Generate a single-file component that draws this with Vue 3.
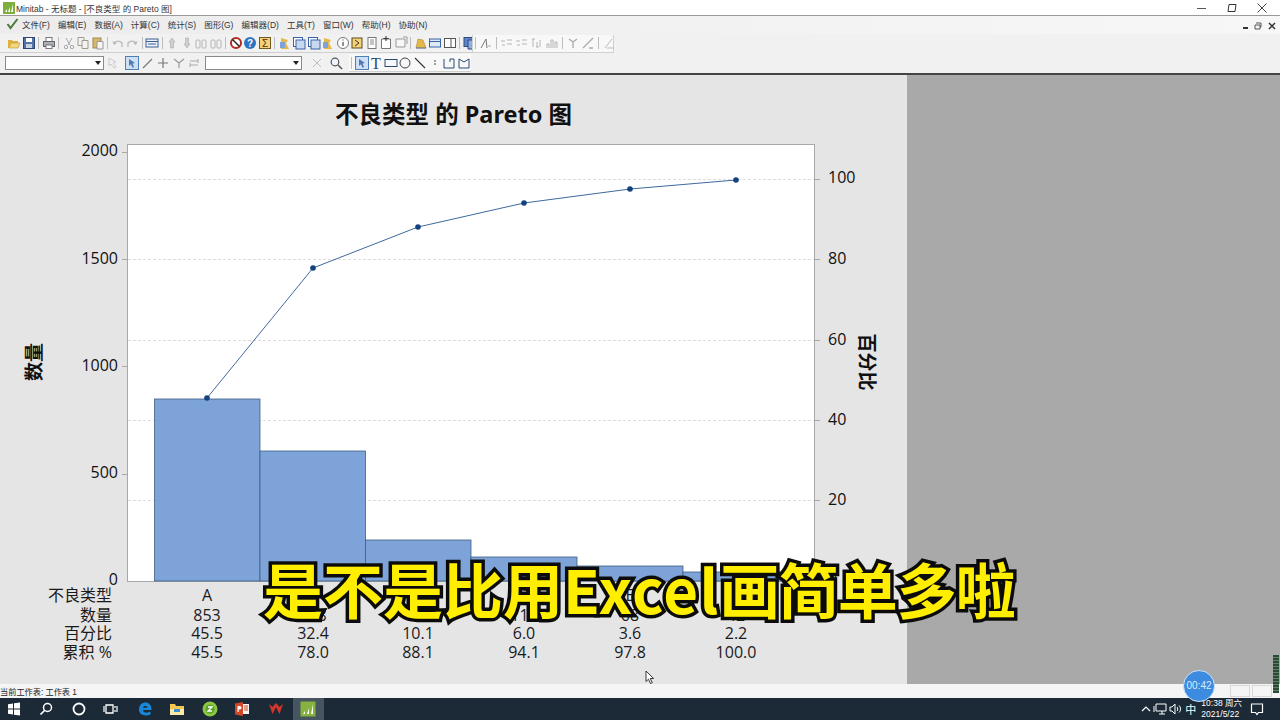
<template>
  <div class="screen">
    <div class="titlebar">
      <svg class="app-logo" width="12" height="12" viewBox="0 0 12 12"><rect width="12" height="12" fill="#7fae3c"/><path d="M2 10l2-3v3zM5 10l2-5v5zM8 10l2-8v8z" fill="#fff"/></svg>
      <span class="title-text">Minitab - 无标题 - [不良类型 的 Pareto 图]</span>
      <div class="win-btns">
        <svg width="12" height="12" viewBox="0 0 12 12"><path d="M1 6.500h9" stroke="#555" stroke-width="1"/></svg>
        <svg width="12" height="12" viewBox="0 0 12 12"><path d="M3 2.500h7l-1 7H2z" fill="none" stroke="#333" stroke-width="1"/></svg>
        <svg width="12" height="12" viewBox="0 0 12 12"><path d="M1.500 1.500l9 9M10.500 1.500l-9 9" stroke="#444" stroke-width="1"/></svg>
      </div>
    </div>

    <div class="menubar">
      <svg class="check" width="13" height="13" viewBox="0 0 13 13"><path d="M1.500 7l3 4 7-9" fill="none" stroke="#4c7a3a" stroke-width="2"/></svg>
      <span v-for="m in menus" :key="m" class="menu-item">{{ m }}</span>
      <div class="doc-btns">
        <i class="doc-min"></i>
        <svg width="8" height="8" viewBox="0 0 8 8"><path d="M2 1h5v4H6M1 3h5v4H1z" fill="none" stroke="#555"/></svg>
        <svg width="8" height="8" viewBox="0 0 8 8"><path d="M1 1l6 6M7 1L1 7" stroke="#333" stroke-width="1.500"/></svg>
      </div>
    </div>

    <div class="toolrow">
      <div class="toolgroup first">
        <template v-for="(n, i) in row1a" :key="i">
          <i v-if="n === '|'" class="sep"></i>
          <svg v-else class="ico" viewBox="0 0 14 14" v-html="icons[n]"></svg>
        </template>
      </div>
      <div class="toolgroup second">
        <template v-for="(n, i) in row1b" :key="i">
          <i v-if="n === '|'" class="sep"></i>
          <svg v-else class="ico" viewBox="0 0 14 14" v-html="icons[n]"></svg>
        </template>
      </div>
    </div>

    <div class="toolrow row3">
      <div class="toolgroup combos">
        <div class="combo"><span class="arrow"></span></div>
        <svg class="ico faint" viewBox="0 0 14 14" v-html="icons.arrowish"></svg>
        <svg class="ico selected pick-first" viewBox="0 0 14 14" v-html="icons.pick"></svg>
        <svg class="ico" viewBox="0 0 14 14" v-html="icons.slash"></svg>
        <svg class="ico" viewBox="0 0 14 14" v-html="icons.plus"></svg>
        <svg class="ico" viewBox="0 0 14 14" v-html="icons.funnel"></svg>
        <svg class="ico" viewBox="0 0 14 14" v-html="icons.swap"></svg>
        <div class="combo second-combo"><span class="arrow"></span></div>
        <svg class="ico faint gap-l" viewBox="0 0 14 14" v-html="icons.cross"></svg>
        <svg class="ico gap-z" viewBox="0 0 14 14" v-html="icons.zoom"></svg>
      </div>
      <div class="toolgroup draw">
        <i class="sep"></i>
        <svg class="ico selected" viewBox="0 0 14 14" v-html="icons.pick"></svg>
        <svg class="ico" viewBox="0 0 14 14" v-html="icons.tee"></svg>
        <svg class="ico" viewBox="0 0 14 14" v-html="icons.box"></svg>
        <svg class="ico" viewBox="0 0 14 14" v-html="icons.circle"></svg>
        <svg class="ico" viewBox="0 0 14 14" v-html="icons.line"></svg>
        <svg class="ico" viewBox="0 0 14 14" v-html="icons.dots"></svg>
        <svg class="ico" viewBox="0 0 14 14" v-html="icons.poly1"></svg>
        <svg class="ico" viewBox="0 0 14 14" v-html="icons.poly2"></svg>
      </div>
    </div>

    <div class="workspace">
      <div class="chart-win">
        <svg class="chart" width="907" height="609" viewBox="0 75 907 609">
          <text x="453.500" y="123" class="c-title" text-anchor="middle">不良类型 的 Pareto 图</text>

          <rect x="127.500" y="144.500" width="687" height="437" fill="#fff" stroke="#a8a8a8"/>
          <line v-for="y in grid" :key="y" x1="128" x2="814" :y1="y" :y2="y" class="gridline"/>
          <line v-for="y in grid" :key="'r' + y" x1="815" x2="820" :y1="y" :y2="y" class="tickmark"/>
          <line v-for="y in leftMarks" :key="'l' + y" x1="122" x2="127" :y1="y" :y2="y" class="tickmark"/>

          <rect v-for="b in bars" :key="b.x" :x="b.x" :y="b.y" :width="b.w" :height="581 - b.y" fill="#7da3d8" stroke="#3f5f86" stroke-width="0.800"/>

          <polyline :points="linePts" fill="none" stroke="#3f6a9e" stroke-width="1"/>
          <circle v-for="p in points" :key="p[0]" :cx="p[0]" :cy="p[1]" r="2.800" fill="#15427f"/>

          <text v-for="t in leftTicks" :key="t.v" x="118" :y="t.y" class="tick" text-anchor="end">{{ t.v }}</text>
          <text v-for="t in rightTicks" :key="t.v" x="828" :y="t.y" class="tick">{{ t.v }}</text>

          <text transform="translate(41 362) rotate(-90)" class="axis-name" text-anchor="middle">数量</text>
          <text transform="translate(860 362) rotate(90)" class="axis-name" text-anchor="middle">百分比</text>

          <g v-for="row in table" :key="row.label">
            <text x="112" :y="row.y" class="cell" text-anchor="end">{{ row.label }}</text>
            <text v-for="(v, i) in row.values" :key="i" :x="colX[i]" :y="row.y" class="cell" text-anchor="middle">{{ v }}</text>
          </g>
        </svg>
      </div>
      <div class="gray-panel"></div>
    </div>

    <div class="statusbar">
      <span>当前工作表: 工作表 1</span>
      <div class="status-cells"><i></i><i></i></div>
    </div>

    <div class="taskbar">
      <svg class="tb-ico" viewBox="0 0 16 16"><path d="M2 3.200l5-.7v5H2zM8 2.300l6-.9v6.100H8zM2 8.500h5v5l-5-.7zM8 8.500h6v6.100l-6-.9z" fill="#fff"/></svg>
      <svg class="tb-ico" viewBox="0 0 16 16"><circle cx="9.500" cy="6.500" r="4" fill="none" stroke="#fff" stroke-width="1.500"/><path d="M6.500 9.500L2.500 13.500" stroke="#fff" stroke-width="1.700"/></svg>
      <svg class="tb-ico" viewBox="0 0 16 16"><circle cx="8" cy="8" r="5.500" fill="none" stroke="#fff" stroke-width="1.800"/></svg>
      <svg class="tb-ico" viewBox="0 0 16 16"><path d="M3 4h7v8H3z" fill="none" stroke="#fff" stroke-width="1.300"/><path d="M1 5v6M12 5v2M12 9v2M14 5v6" stroke="#fff" stroke-width="1.200"/></svg>
      <svg class="tb-ico edge" viewBox="0 0 16 16"><path d="M2 8.500C2 4 5 1.500 8.500 1.500 12 1.500 14.500 4 14.500 9H6c.3 2.800 4 3.500 7.500 1.500v3C9 15.500 2 14.500 2 8.500zM6 6.800h4.500C10.300 4.500 6.500 4.500 6 6.800z" fill="#1a86d8"/></svg>
      <svg class="tb-ico" viewBox="0 0 16 16"><path d="M1 3h5l1 2h8v9H1z" fill="#f3c650"/><path d="M1 8h14v6H1z" fill="#fbe9a6"/><path d="M5 8h6v3H5z" fill="#3a8fd0"/></svg>
      <svg class="tb-ico" viewBox="0 0 16 16"><circle cx="8" cy="8" r="7.500" fill="#8cc63f"/><circle cx="8" cy="8" r="4.500" fill="#5aa02c"/><path d="M6 6h4L6 10h4" fill="none" stroke="#fff" stroke-width="1.300"/></svg>
      <svg class="tb-ico" viewBox="0 0 16 16"><path d="M1 2.500l8-1.500v14l-8-1.500z" fill="#d24726"/><path d="M9 3h6v10H9z" fill="#f4f4f4"/><path d="M3.500 5h2.300a1.500 1.500 0 010 3.500H4.700V11H3.500z" fill="#fff"/><path d="M10 5h4M10 7h4M10 9h4" stroke="#d24726"/></svg>
      <svg class="tb-ico wps" viewBox="0 0 16 16"><path d="M1 3l3.500 10 3.500-7 3.500 7L15 3l-3.500 3L8 2 4.500 6z" fill="#d8352a"/></svg>
      <div class="tb-active">
        <svg class="tb-ico" viewBox="0 0 16 16"><rect x="0.500" y="0.500" width="15" height="15" fill="#86b33f"/><path d="M3 13l2-3v3zM7 13l2-6v6zM11 13l2-10v10z" fill="#fff"/></svg>
      </div>
      <div class="tray">
        <svg width="10" height="10" viewBox="0 0 10 10"><path d="M1 7l4-4 4 4" fill="none" stroke="#fff" stroke-width="1.200"/></svg>
        <svg width="14" height="12" viewBox="0 0 14 12"><path d="M3 1h10v7H3zM6 11h6M9 8v3" fill="none" stroke="#fff"/><path d="M1 3v6" stroke="#fff"/></svg>
        <svg width="14" height="12" viewBox="0 0 14 12"><path d="M1 4h2l3-3v10L3 8H1z" fill="none" stroke="#fff"/><path d="M8 4c1 1 1 3 0 4M10 2.500c2 2 2 5 0 7" fill="none" stroke="#fff"/></svg>
        <span class="ime">中</span>
        <div class="clock"><span>10:38 周六</span><span>2021/5/22</span></div>
        <svg class="notify" width="14" height="14" viewBox="0 0 14 14"><path d="M1.500 2h11v8.500H8.500L7 12.500 5.500 10.500h-4z" fill="none" stroke="#fff" stroke-width="1.200"/></svg>
      </div>
    </div>

    <div class="timer">00:42</div>
    <div class="edge-strip"></div>
    <svg class="cursor" width="11" height="15" viewBox="0 0 11 15"><path d="M1 1v10.500l2.500-2.300 2 4.300 1.800-.8-2-4.200h3.300z" fill="#fff" stroke="#222" stroke-width="0.900"/></svg>
    <div class="subtitle">是不是比用<span class="sub-latin">Excel</span><span class="sub-tail">画简单多啦</span></div>
  </div>
</template>

<script setup>
const menus = ['文件(F)', '编辑(E)', '数据(A)', '计算(C)', '统计(S)', '图形(G)', '编辑器(D)', '工具(T)', '窗口(W)', '帮助(H)', '协助(N)']

const icons = {
  open: '<path d="M1 4h4l1 1h5v2H4L2 12H1z" fill="#e3b23c"/><path d="M4 7h9l-2 5H2z" fill="#f4d67a" stroke="#a8842c" stroke-width=".5"/>',
  save: '<rect x="1.500" y="1.500" width="11" height="11" fill="#5273a8" stroke="#2c4470"/><rect x="4" y="2" width="6" height="4" fill="#fff"/><rect x="4" y="8" width="6" height="4" fill="#c8d2e0"/>',
  print: '<rect x="4" y="1.500" width="6" height="4" fill="#fff" stroke="#777"/><rect x="1.500" y="5.500" width="11" height="5" fill="#a9b0b8" stroke="#666"/><rect x="4" y="9" width="6" height="3.500" fill="#fff" stroke="#777"/>',
  cut: '<path d="M4 2l4 7M10 2L6 9" stroke="#a8a8a8"/><circle cx="4" cy="11" r="1.700" fill="none" stroke="#a8a8a8"/><circle cx="10" cy="11" r="1.700" fill="none" stroke="#a8a8a8"/>',
  copy: '<path d="M2 1.500h6v8H2z" fill="#f2f2f2" stroke="#a09a8a"/><path d="M6 4.500h6v8H6z" fill="#f2f2f2" stroke="#a09a8a"/>',
  paste: '<rect x="2" y="2" width="8" height="10" fill="#d8b76a" stroke="#a08a50"/><path d="M6 5.500h6v7.500H6z" fill="#f5f5f5" stroke="#999"/>',
  undo: '<path d="M3 8c0-3 5-4 8-1v4" fill="none" stroke="#b8b8b8" stroke-width="1.200"/><path d="M1.500 5L3 9l3-2" fill="#b8b8b8"/>',
  redo: '<path d="M11 8c0-3-5-4-8-1v4" fill="none" stroke="#b8b8b8" stroke-width="1.200"/><path d="M12.500 5L11 9 8 7" fill="#b8b8b8"/>',
  sheet: '<rect x="1" y="3" width="12" height="8" fill="#eef3fa" stroke="#3a5f93"/><path d="M1 5.500h12M3 8h8" stroke="#3a5f93"/>',
  up: '<path d="M7 2l3 4H8.500v6h-3V6H4z" fill="#cfcfcf" stroke="#aaa" stroke-width=".6"/>',
  down: '<path d="M7 12l3-4H8.500V2h-3v6H4z" fill="#cfcfcf" stroke="#aaa" stroke-width=".6"/>',
  bino: '<rect x="2" y="4" width="4" height="8" rx="1" fill="none" stroke="#b5b5b5"/><rect x="8" y="4" width="4" height="8" rx="1" fill="none" stroke="#b5b5b5"/>',
  stop: '<circle cx="7" cy="7" r="5" fill="#fff" stroke="#b02a1e" stroke-width="2"/><path d="M3.500 3.500l7 7" stroke="#222" stroke-width="1.400"/>',
  help: '<circle cx="7" cy="7" r="6" fill="#2b73c4"/><text x="7" y="10.500" font-size="10" font-weight="700" text-anchor="middle" fill="#fff" font-family="Liberation Sans">?</text>',
  sigma: '<rect x="1.500" y="1.500" width="11" height="11" fill="#f3d27a" stroke="#6f5a22"/><text x="7" y="11" font-size="10" text-anchor="middle" fill="#5a2a10" font-family="Liberation Sans">Σ</text>',
  wizard: '<path d="M3 2l7 2-2 3 3 6H3z" fill="#e6b847"/><path d="M2 6h5v6H2z" fill="#7ea2d6"/>',
  pages: '<rect x="1.500" y="1.500" width="9" height="9" fill="#fff" stroke="#3a64a8"/><rect x="4" y="4" width="9" height="9" fill="#c8d8f0" stroke="#3a64a8"/>',
  info: '<circle cx="7" cy="7" r="5.500" fill="#fff" stroke="#777"/><path d="M7 6v4M7 3.500v1" stroke="#555" stroke-width="1.300"/>',
  note: '<rect x="2" y="2" width="10" height="10" fill="#f3d27a" stroke="#5b4a1a"/><path d="M5 4l4 3-4 3" fill="none" stroke="#333"/>',
  doc: '<rect x="3" y="1.500" width="8" height="11" fill="#fff" stroke="#777"/><path d="M5 4h4M5 6h4M5 8h4" stroke="#888"/>',
  docplus: '<path d="M2.500 3h9v9.500h-9z" fill="#fff" stroke="#777"/><path d="M7 0v5M4.500 2.500h5" stroke="#333"/>',
  docs: '<path d="M2 3h9v8H2z" fill="#f6f6f6" stroke="#999"/><path d="M9 1h4v7" fill="none" stroke="#999"/>',
  chartw: '<path d="M2 12l2-9 5 1 3 8z" fill="#e6b847" stroke="#9a7a22" stroke-width=".5"/><path d="M2 12h10" stroke="#5a7bb0"/>',
  win: '<rect x="1.500" y="3" width="11" height="8" fill="#dfe8f5" stroke="#3a64a8"/><path d="M1.500 5.500h11" stroke="#3a64a8"/>',
  split: '<rect x="1.500" y="2.500" width="11" height="9" fill="#fff" stroke="#555"/><path d="M8 2.500v9" stroke="#555"/>',
  close: '<rect x="1" y="1.500" width="9" height="9" fill="#5d86c6" stroke="#2a4a80"/><path d="M5 4h8v9H5z" fill="#8fb0de" stroke="#2a4a80"/><path d="M9 9l4 4M13 9l-4 4" stroke="#d22" stroke-width="1.300"/>',
  gr1: '<path d="M2 12L7 3l1 9" fill="none" stroke="#777"/><path d="M9 10h3" stroke="#aaa"/>',
  gr2: '<path d="M1 5h4M7 4h5M7 8h5M2 9h3" stroke="#b5b5b5"/>',
  gr3: '<path d="M3 3v8M7 6v5M2 3h3M6 11h3M10 4v7" stroke="#b5b5b5"/>',
  gr4: '<path d="M2 12V8h2v4M6 12V4h2v8M10 12V6h2v6" fill="none" stroke="#b5b5b5"/>',
  gr5: '<path d="M3 3l4 3 4-3M7 6v6" fill="none" stroke="#aaa" stroke-width="1.300"/>',
  gr6: '<path d="M2 12L12 2M8 12h4" stroke="#aaa" stroke-width="1.300"/>',
  gr7: '<path d="M3 12L10 3M5 12h7" stroke="#bbb"/>',
  arrowish: '<path d="M3 2l7 4-3 1 3 4-2 1-3-4-2 2z" fill="none" stroke="#bbb"/>',
  pick: '<path d="M4 3l6 4-2.500.5L9 11l-1.500.8L6 8.300 4 10z" fill="#4f79b0"/>',
  slash: '<path d="M2 12L11 3" stroke="#7a7a7a" stroke-width="1.200"/>',
  plus: '<path d="M7 2v10M2 7h10" stroke="#777" stroke-width="1.200"/>',
  funnel: '<path d="M2 3l5 4 5-4M7 7v5" fill="none" stroke="#999" stroke-width="1.200"/>',
  swap: '<path d="M3 5h8M3 9h8M11 3v4M3 7v4" fill="none" stroke="#aaa"/>',
  cross: '<path d="M3 3l8 8M11 3l-8 8" stroke="#aaa"/>',
  zoom: '<circle cx="6" cy="6" r="3.800" fill="#eef5ff" stroke="#555" stroke-width="1.200"/><path d="M9 9l4 4" stroke="#555" stroke-width="1.600"/>',
  tee: '<text x="7" y="12.500" font-size="16" text-anchor="middle" fill="#2a4a70" font-family="Liberation Serif">T</text>',
  box: '<rect x="1" y="3.500" width="12" height="7" fill="none" stroke="#2a4a70"/>',
  circle: '<circle cx="7" cy="7" r="5" fill="none" stroke="#444"/>',
  line: '<path d="M2 2l10 10" stroke="#333" stroke-width="1.100"/>',
  dots: '<path d="M6 5h2M6 8h2" stroke="#444"/>',
  poly1: '<path d="M2 3v9h10V3H8v3" fill="none" stroke="#2a4a70"/>',
  poly2: '<path d="M2 3l5 3 5-3v9H2z" fill="none" stroke="#2a4a70"/>'
}

const row1a = ['open', 'save', '|', 'print', '|', 'cut', 'copy', 'paste', '|', 'undo', 'redo', '|', 'sheet', '|', 'up', 'down', 'bino', 'bino', '|', 'stop', 'help', 'sigma', '|', 'wizard', 'pages', 'pages', 'wizard', 'info', 'note', 'doc', 'docplus', 'docs', '|', 'chartw', 'win', 'split', '|', 'close']
const row1b = ['|', 'gr1', '|', 'gr2', 'gr2', 'gr3', 'gr4', '|', 'gr5', 'gr6', '|', 'gr7']

const grid = [179.500, 259.500, 340.500, 420.500, 500.500]
const leftMarks = [152.500, 259.500, 366.500, 474.500]

const bars = [
  { x: 154.500, w: 105.500, y: 399 },
  { x: 260, w: 105.500, y: 451 },
  { x: 365.500, w: 105.500, y: 540 },
  { x: 471, w: 106, y: 557 },
  { x: 577, w: 106, y: 566 },
  { x: 683, w: 106, y: 572 }
]

const points = [[207, 398], [313, 268], [418, 227], [524, 203], [630, 189], [736, 180]]
const linePts = points.map(p => p.join(',')).join(' ')

const leftTicks = [
  { v: 2000, y: 156 }, { v: 1500, y: 264 }, { v: 1000, y: 371 }, { v: 500, y: 478 }, { v: 0, y: 585 }
]
const rightTicks = [
  { v: 100, y: 183 }, { v: 80, y: 264 }, { v: 60, y: 345 }, { v: 40, y: 425 }, { v: 20, y: 505 }, { v: 0, y: 585 }
]

const colX = [207, 313, 418, 524, 630, 736]
const table = [
  { label: '不良类型', y: 601, values: ['A', 'B', 'C', 'D', 'E', 'F'] },
  { label: '数量', y: 621, values: [853, 608, 190, 113, 68, 42] },
  { label: '百分比', y: 639, values: ['45.5', '32.4', '10.1', '6.0', '3.6', '2.2'] },
  { label: '累积 %', y: 658, values: ['45.5', '78.0', '88.1', '94.1', '97.8', '100.0'] }
]
</script>

<style>
html, body { margin: 0; overflow: hidden; }
</style>

<style scoped>
.screen {
  position: relative;
  width: 1280px;
  height: 720px;
  overflow: hidden;
  display: flex;
  flex-direction: column;
  background: #f0f0f0;
  font-family: "Noto Sans", "Noto Sans CJK SC", sans-serif;
  color: #222;
}

.titlebar {
  height: 15px;
  background: #fff;
  border-bottom: 1px solid #9a9a9a;
  display: flex;
  align-items: center;
  padding-left: 3px;
  flex: none;
}
.app-logo { margin-right: 1px; }
.title-text { font-size: 8.500px; color: #333; font-family: "Liberation Sans", "Noto Sans CJK SC", sans-serif; }
.win-btns { margin-left: auto; display: flex; gap: 18px; padding-right: 12px; }

.menubar {
  height: 18px;
  flex: none;
  box-sizing: border-box;
  padding-bottom: 3px;
  display: flex;
  align-items: center;
  padding-left: 6px;
  background: linear-gradient(90deg, #ececec, #f7f7f7);
  font-family: "Liberation Sans", "Noto Sans CJK SC", sans-serif;
}
.check { margin-right: 3px; }
.menu-item { font-size: 8.500px; color: #333; margin-right: 8.100px; white-space: nowrap; }
.doc-btns { margin-left: auto; display: flex; align-items: center; gap: 6px; padding-right: 4px; padding-top: 5px; }
.doc-min { width: 5px; height: 2px; background: #333; margin-top: 3px; }

.toolrow {
  height: 19px;
  flex: none;
  display: flex;
  background: #f1f1f1;
  align-items: center;
}
.row3 { height: 22px; border-bottom: 2px solid #444; box-sizing: border-box; }

.toolgroup { display: flex; align-items: center; height: 17px; }
.toolgroup.first { padding-left: 7px; gap: 0.500px; width: 465px; flex: none; border-bottom: 1px solid #cfcfcf; }
.toolgroup.second { background: #f8f8f8; border: 1px solid #d0d0d0; border-top: 0; width: 140px; gap: 1px; flex: none; }
.ico { width: 14px; height: 14px; flex: none; }
.faint { opacity: .7; }
.selected { background: #cfe0f5; outline: 1px solid #4f7fb8; outline-offset: -1px; }
.sep { width: 1px; height: 12px; background: #bdbdbd; margin: 0 2px; flex: none; }

.combos { padding-left: 5px; gap: 1.500px; width: 349px; flex: none; box-sizing: border-box; }
.combo {
  width: 99px;
  height: 14px;
  background: #fff;
  border: 1px solid #8a8a8a;
  box-sizing: border-box;
  position: relative;
  flex: none;
}
.pick-first { margin-left: 4px; }
.second-combo { margin-left: 2px; width: 97px; }
.arrow {
  position: absolute;
  right: 2px;
  top: 4px;
  border: 3px solid transparent;
  border-top: 4px solid #222;
  border-bottom: 0;
}
.gap-l { margin-left: 7px; }
.gap-z { margin-left: 3px; }
.draw { gap: 0.600px; background: #f8f8f8; border-bottom: 1px solid #cfcfcf; }

.workspace {
  flex: 1;
  min-height: 0;
  display: flex;
}
.chart-win { width: 907px; background: #e6e5e6; flex: none; overflow: hidden; }
.chart { display: block; }
.gray-panel { flex: 1; background: #a9a9a9; }

.c-title { font: 700 23.500px "Noto Sans", "Noto Sans CJK SC", sans-serif; fill: #111; }
.tick { font: 400 16px "Open Sans", sans-serif; fill: #111; }
.axis-name { font: 700 19px "Noto Sans CJK SC", sans-serif; fill: #111; }
.cell { font: 400 16px "Open Sans", "Noto Sans CJK SC", sans-serif; fill: #1a1a1a; }
.gridline { stroke: #dcdcdc; stroke-dasharray: 3 2; }
.tickmark { stroke: #a8a8a8; }

.statusbar {
  height: 14px;
  flex: none;
  background: #f5f5f5;
  display: flex;
  align-items: center;
  font-size: 8.200px;
  color: #222;
  font-family: "Liberation Sans", "Noto Sans CJK SC", sans-serif;
}
.status-cells { margin-left: auto; display: flex; gap: 2px; padding-right: 8px; }
.status-cells i { width: 20px; height: 12px; border: 1px solid #d8d8d8; box-sizing: border-box; }

.taskbar {
  height: 22px;
  flex: none;
  background: #1b2a36;
  display: flex;
  align-items: center;
  padding-left: 6px;
  gap: 16.300px;
}
.tb-ico { width: 16px; height: 16px; flex: none; }
.edge { margin-left: 2px; }
.wps { margin-left: 1.500px; }
.tb-active {
  width: 31px;
  height: 22px;
  margin-left: -7.500px;
  background: #465560;
  display: flex;
  align-items: center;
  justify-content: center;
}
.tray {
  margin-left: auto;
  display: flex;
  align-items: center;
  gap: 2px;
  color: #fff;
  padding-right: 16px;
}
.ime { font-size: 11px; font-family: "Noto Sans CJK SC", sans-serif; }
.clock {
  display: flex;
  flex-direction: column;
  font-size: 8.500px;
  line-height: 11px;
  align-items: flex-start;
  margin-left: 3px;
  font-family: "Liberation Sans", "Noto Sans CJK SC", sans-serif;
}
.notify { margin-left: 6px; }

.timer {
  position: absolute;
  left: 1183px;
  top: 670px;
  width: 32px;
  height: 32px;
  border-radius: 50%;
  background: #3d8be0;
  border: 1px solid #cfe3f8;
  box-sizing: border-box;
  color: #dceaf9;
  font: 10px/30px "Liberation Sans", sans-serif;
  text-align: center;
}
.edge-strip {
  position: absolute;
  left: 1273px;
  top: 655px;
  width: 6px;
  height: 38px;
  background: repeating-linear-gradient(180deg, #2c4a38 0 2px, #5d7f68 2px 3px);
}
.cursor { position: absolute; left: 645px; top: 670px; }

.subtitle {
  position: absolute;
  left: 263px;
  top: 546px;
  font: 700 60px/84px "Noto Sans CJK SC", sans-serif;
  white-space: nowrap;
  color: #ffee00;
  -webkit-text-stroke: 7px #0b0b0b;
  paint-order: stroke fill;
}
.sub-latin { letter-spacing: 1.400px; }
.sub-tail { letter-spacing: -1px; }
</style>
